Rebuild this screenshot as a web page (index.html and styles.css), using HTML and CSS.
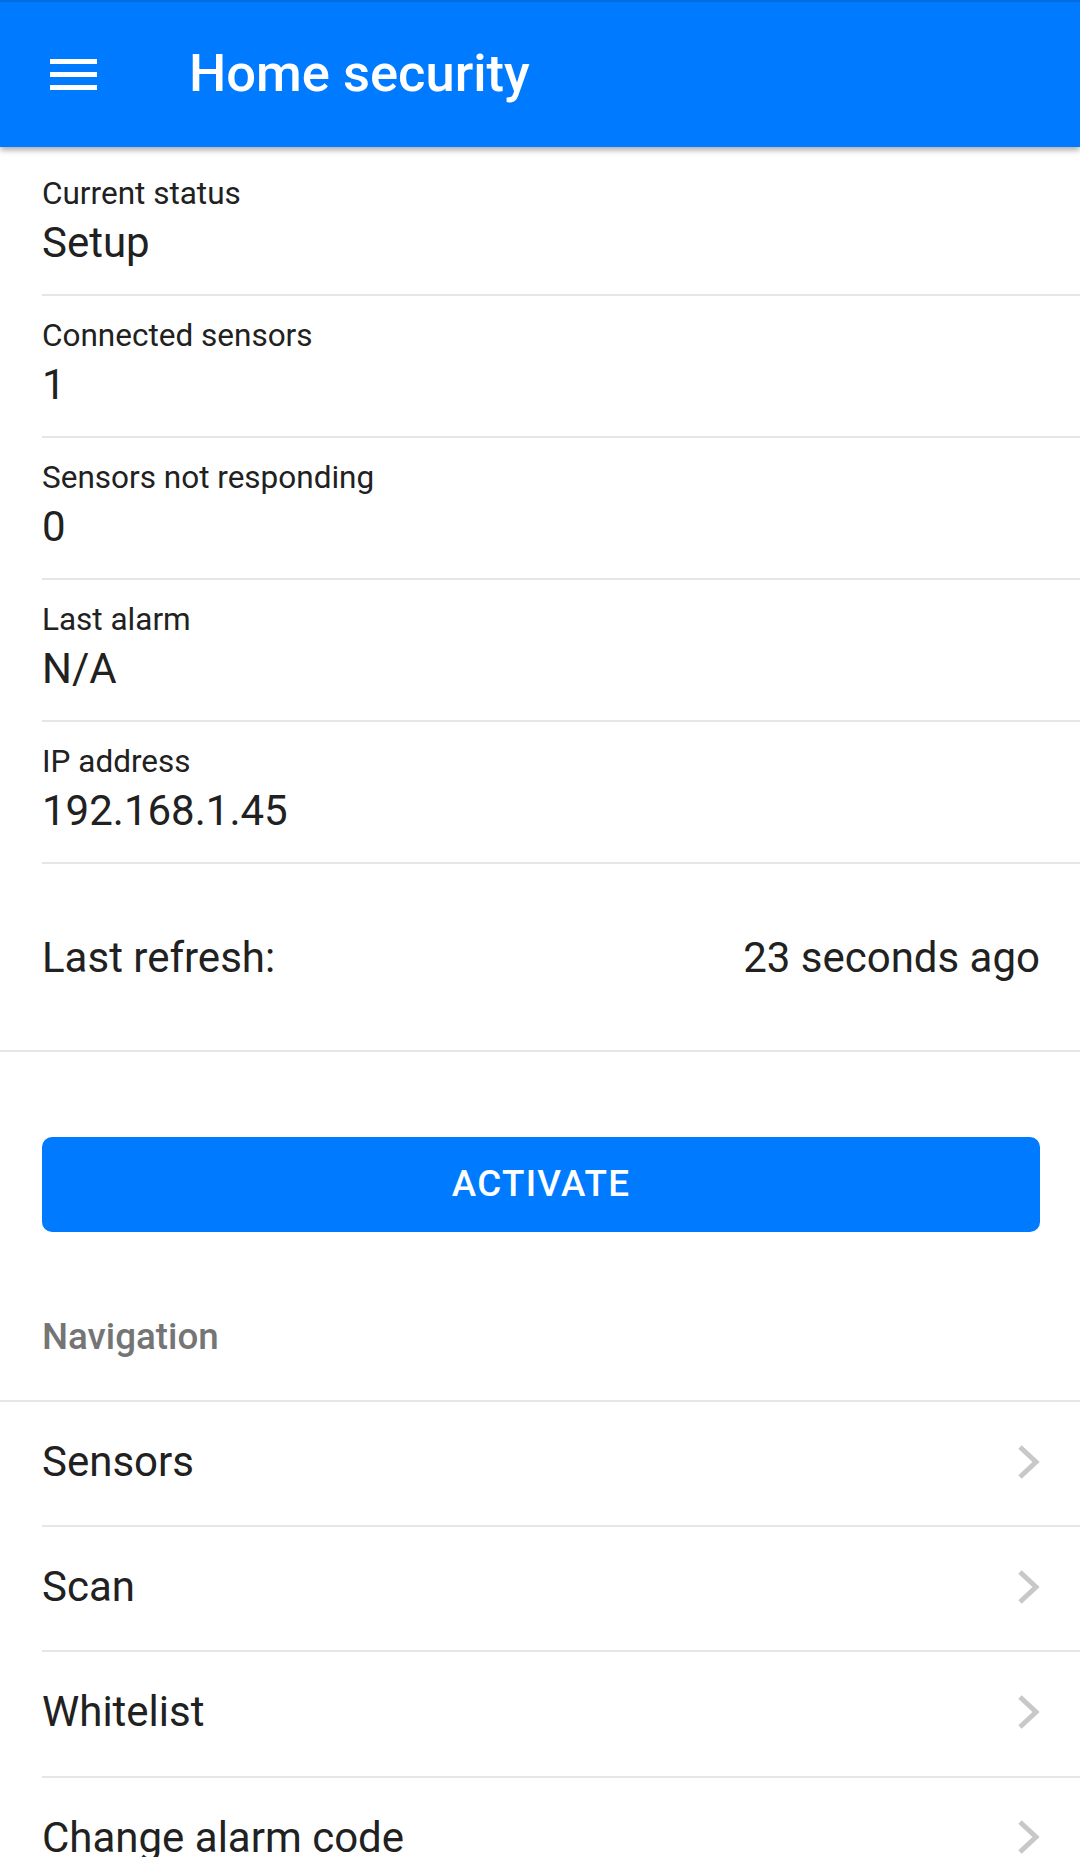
FILE: index.html
```html
<!DOCTYPE html>
<html lang="en">
<head>
<meta charset="utf-8">
<title>Home security</title>
<link rel="stylesheet" href="styles.css">
</head>
<body>
<header class="appbar">
  <button class="menu-btn" aria-label="Menu">
    <svg width="47" height="32" viewBox="0 0 47 32" aria-hidden="true">
      <rect x="0" y="0" width="47" height="5" fill="#fff"/>
      <rect x="0" y="13" width="47" height="5" fill="#fff"/>
      <rect x="0" y="26" width="47" height="5" fill="#fff"/>
    </svg>
  </button>
  <h1 class="title">Home security</h1>
</header>

<main class="content">
  <ul class="info-list">
    <li class="info-row">
      <div class="info-label">Current status</div>
      <div class="info-value">Setup</div>
    </li>
    <li class="info-row">
      <div class="info-label">Connected sensors</div>
      <div class="info-value">1</div>
    </li>
    <li class="info-row">
      <div class="info-label">Sensors not responding</div>
      <div class="info-value">0</div>
    </li>
    <li class="info-row">
      <div class="info-label">Last alarm</div>
      <div class="info-value">N/A</div>
    </li>
    <li class="info-row">
      <div class="info-label">IP address</div>
      <div class="info-value">192.168.1.45</div>
    </li>
  </ul>

  <div class="refresh-row">
    <span>Last refresh:</span>
    <span>23 seconds ago</span>
  </div>

  <div class="action">
    <button class="activate-btn">ACTIVATE</button>
  </div>

  <h2 class="section-title">Navigation</h2>

  <ul class="nav-list">
    <li class="nav-row"><span>Sensors</span><svg class="chev" width="22" height="34" viewBox="0 0 22 34" aria-hidden="true"><polyline points="2,2 18,17 2,32" fill="none" stroke="#c8c8c8" stroke-width="5"/></svg></li>
    <li class="nav-row"><span>Scan</span><svg class="chev" width="22" height="34" viewBox="0 0 22 34" aria-hidden="true"><polyline points="2,2 18,17 2,32" fill="none" stroke="#c8c8c8" stroke-width="5"/></svg></li>
    <li class="nav-row"><span>Whitelist</span><svg class="chev" width="22" height="34" viewBox="0 0 22 34" aria-hidden="true"><polyline points="2,2 18,17 2,32" fill="none" stroke="#c8c8c8" stroke-width="5"/></svg></li>
    <li class="nav-row"><span>Change alarm code</span><svg class="chev" width="22" height="34" viewBox="0 0 22 34" aria-hidden="true"><polyline points="2,2 18,17 2,32" fill="none" stroke="#c8c8c8" stroke-width="5"/></svg></li>
  </ul>
</main>
</body>
</html>
```

FILE: styles.css
```css
* { box-sizing: border-box; }

html, body {
  margin: 0;
  padding: 0;
  background: #ffffff;
  font-family: Roboto, "Noto Sans", "Liberation Sans", sans-serif;
  color: #212121;
}

body {
  width: 1080px;
  height: 1857px;
  overflow: hidden;
}

.appbar {
  position: relative;
  z-index: 2;
  height: 147px;
  background: #007bff;
  display: flex;
  align-items: center;
  box-shadow: inset 0 2px 0 rgba(0, 0, 0, 0.12), 0 3px 6px rgba(0, 0, 0, 0.34);
}

.menu-btn {
  margin: 2px 0 0 50px;
  padding: 0;
  border: 0;
  background: none;
  width: 47px;
  height: 32px;
  display: flex;
  align-items: center;
  justify-content: center;
}

.menu-btn svg { display: block; }

.title {
  margin: 0 0 0 92px;
  font-size: 52.5px;
  font-weight: 500;
  color: #ffffff;
  line-height: 1;
}

.content { display: block; }

.info-list,
.nav-list {
  list-style: none;
  margin: 0;
  padding: 0;
}

.info-list { padding-top: 7px; }

.info-row {
  margin-left: 42px;
  padding: 21px 0 27px 0;
  border-bottom: 2px solid #e6e6e6;
}

.info-label {
  font-size: 31.5px;
  line-height: 37px;
  color: #212121;
}

.info-value {
  margin-top: 6px;
  font-size: 42px;
  line-height: 49px;
  color: #212121;
}

.refresh-row {
  height: 188px;
  padding: 0 40px 0 42px;
  display: flex;
  align-items: center;
  justify-content: space-between;
  font-size: 42px;
  border-bottom: 2px solid #e6e6e6;
}

.action {
  padding: 85px 40px 0 42px;
}

.activate-btn {
  display: block;
  width: 100%;
  height: 95px;
  border: 0;
  border-radius: 10px;
  background: #007bff;
  color: #ffffff;
  font-family: Roboto, "Noto Sans", sans-serif;
  font-size: 36.75px;
  font-weight: 500;
  letter-spacing: 1.3px;
  padding: 0 0 2px 0;
}

.section-title {
  margin: 0;
  padding: 83px 42px 42px 42px;
  font-size: 36.75px;
  line-height: 43px;
  font-weight: 500;
  color: #757575;
  border-bottom: 2px solid #e6e6e6;
}

.nav-row {
  margin-left: 42px;
  height: 125.2px;
  padding: 0 40px 4px 0;
  display: flex;
  align-items: center;
  justify-content: space-between;
  font-size: 42px;
  border-bottom: 2px solid #e6e6e6;
}

.nav-row span { white-space: nowrap; }

.chev { display: block; flex: none; }
```
